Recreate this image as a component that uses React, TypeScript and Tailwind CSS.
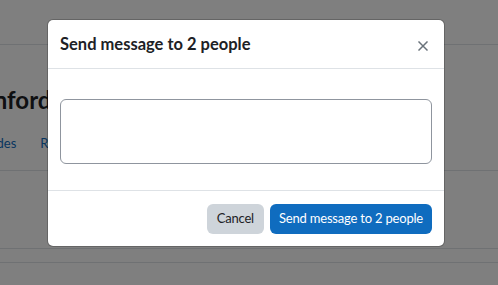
import React from 'react';

const font = { fontFamily: 'Lato, "Noto Sans", sans-serif' };

function CloseIcon() {
    return (
        <svg width="10" height="10" viewBox="0 0 10 10" aria-hidden="true">
            <path d="M1 1 L9 9 M9 1 L1 9" stroke="#6a737b" strokeWidth="1.5" strokeLinecap="square" />
        </svg>
    );
}

function Backdrop() {
    // the course page behind the dialog
    return (
        <div className="w-[498px] h-[285px] overflow-hidden bg-white">
            <div className="h-[45px] border-b border-[#dee2e6]" />
            <div className="h-[126px] border-b border-[#dee2e6] pt-[39px]">
                <h1 className="ml-[-40px] text-[24px] font-bold leading-[32px] text-[#1d2125] whitespace-nowrap">Stanford</h1>
                <div className="mt-[18px] ml-[-24px] flex gap-[24px] text-[13px] text-[#0f6cbf] whitespace-nowrap">
                    <span>Grades</span>
                    <span>Reports</span>
                </div>
            </div>
            <div className="h-[78px] border-b border-[#dee2e6]" />
            <div className="h-[14px] border-b border-[#dee2e6]" />
        </div>
    );
}

export default function App() {
    return (
        <div className="relative w-[498px] h-[285px] overflow-hidden" style={font}>
            <Backdrop />
            <div className="absolute inset-0 bg-black/50 pl-[47px] pt-[19px]">
                <div className="w-[398px] h-[228px] flex flex-col rounded-[6px] border border-black/20 bg-white bg-clip-padding">
                    <div className="h-[49px] flex items-center justify-between border-b border-[#dee2e6] pl-[12px] pr-[15px]">
                        <h5 className="text-[16.5px] font-bold text-[#1d2125] pt-[1px]">Send message to 2 people</h5>
                        <button className="flex items-center justify-center w-[12px] h-[12px] mt-[3px]">
                            <CloseIcon />
                        </button>
                    </div>
                    <div className="h-[122px] border-b border-[#dee2e6] px-[12px] pt-[30px]">
                        <textarea className="block w-full h-[65px] resize-none rounded-[6px] border border-[#8f959e] bg-white" />
                    </div>
                    <div className="flex-1 flex items-center justify-end gap-[6px] px-[12px] pt-[1px]">
                        <button className="h-[30px] px-[10px] rounded-[6px] bg-[#ced4da] text-[13px] tracking-[-0.2px] text-[#1d2125]">Cancel</button>
                        <button className="h-[30px] px-[9px] rounded-[6px] bg-[#0f6cbf] text-[13px] tracking-[-0.2px] text-white">Send message to 2 people</button>
                    </div>
                </div>
            </div>
        </div>
    );
}
